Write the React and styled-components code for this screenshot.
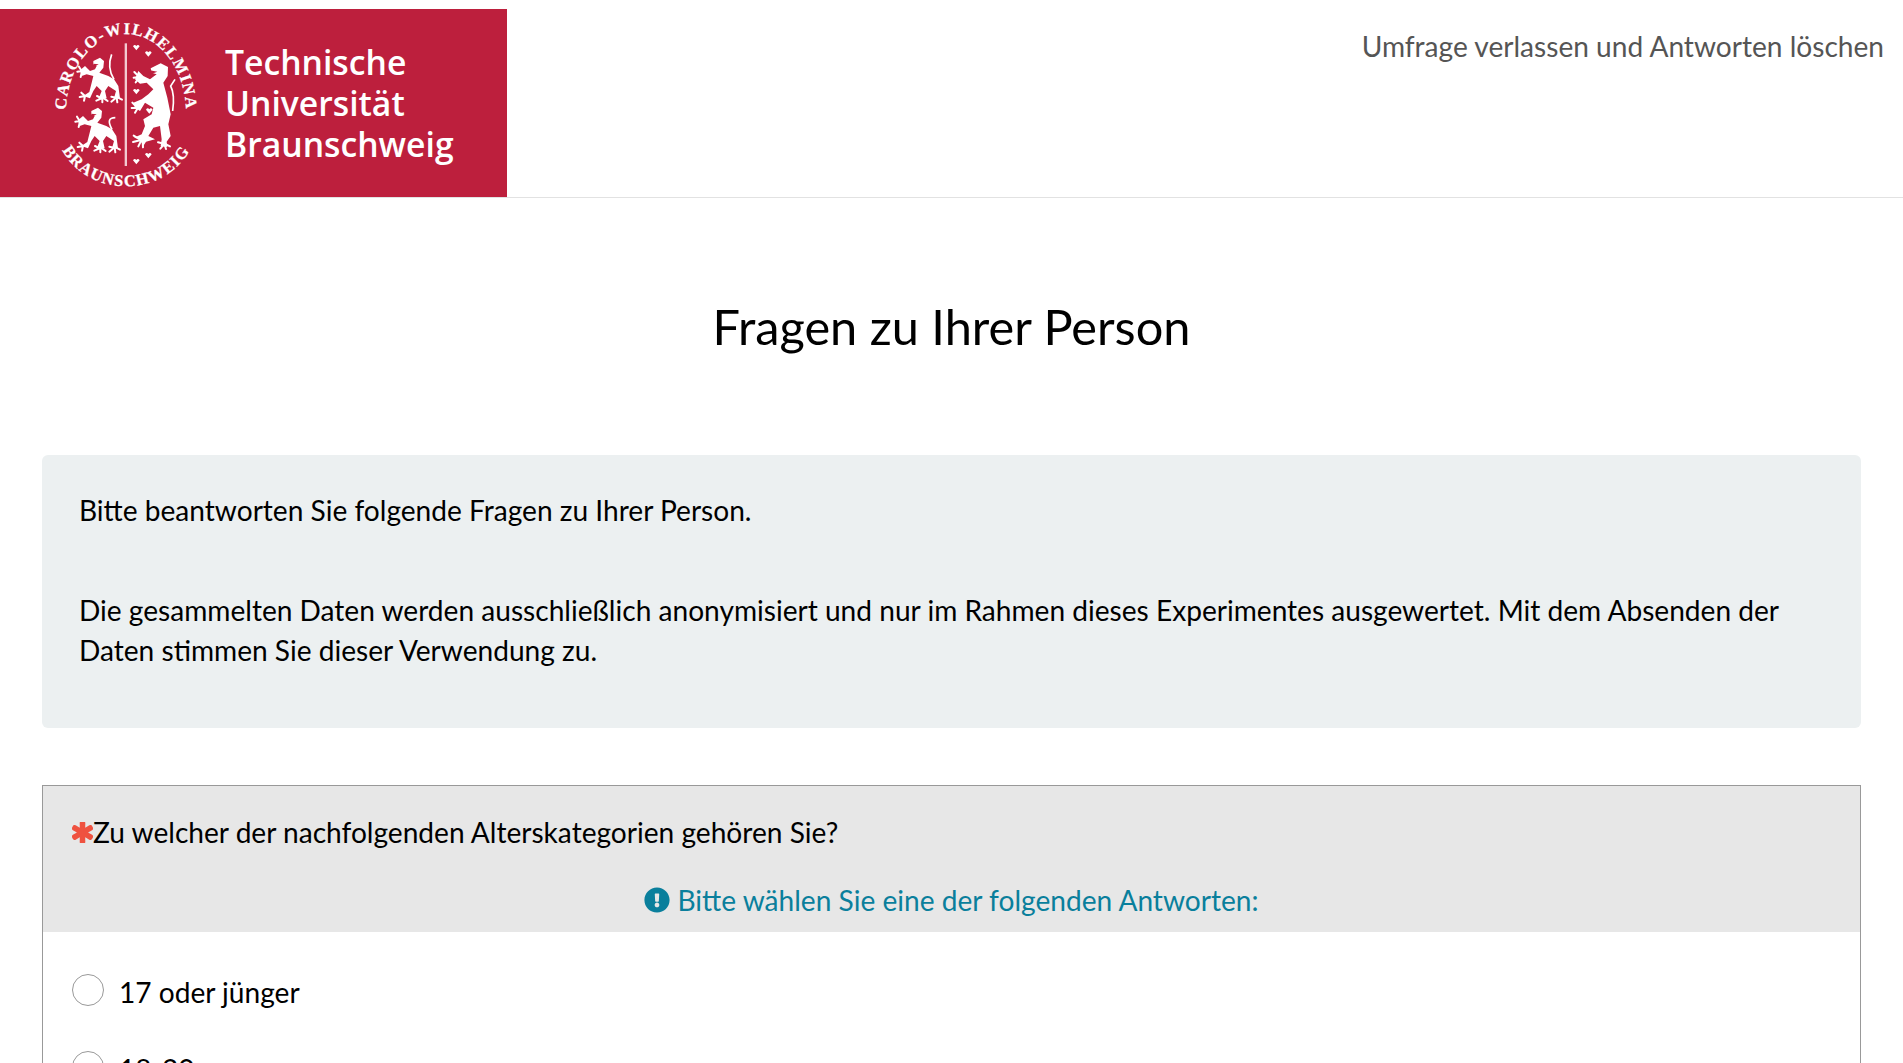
import styled, { createGlobalStyle } from "styled-components";
import { FaAsterisk, FaExclamationCircle } from "react-icons/fa";

const GlobalStyle = createGlobalStyle`
    html, body {
        margin: 0;
        padding: 0;
        background: #fff;
        overflow: hidden;
    }
    body {
        font-family: Lato, "Liberation Sans", sans-serif;
        color: #000;
    }
`;

const Page = styled.div`
    height: 1063px;
    overflow: hidden;
`;

const Header = styled.header`
    height: 188px;
    padding-top: 9px;
    display: flex;
    justify-content: space-between;
    align-items: flex-start;
    border-bottom: 1px solid #e2e2e2;
`;

const Logo = styled.div`
    width: 507px;
    height: 188px;
    background: #bd1f3d;
    display: flex;
    align-items: center;
    padding-left: 40px;
    box-sizing: border-box;
    gap: 15px;
`;

const LogoName = styled.div`
    font-family: "Open Sans", sans-serif;
    font-weight: 600;
    font-size: 33.7px;
    line-height: 41px;
    color: #fff;
`;

const LeaveLink = styled.a`
    margin: 17px 19px 0 0;
    font-size: 28.1px;
    line-height: 40px;
    color: #555;
`;

const Title = styled.h1`
    margin: 0;
    padding: 98px 0 0;
    height: 159px;
    box-sizing: content-box;
    text-align: center;
    font-size: 48.7px;
    line-height: 60px;
    font-weight: 400;
    color: #000;
`;

const IntroBox = styled.section`
    margin: 0 42px;
    height: 273px;
    box-sizing: border-box;
    padding: 35px 37px;
    background: #ecf0f1;
    border-radius: 6px;
    font-size: 28.1px;
    line-height: 40px;
`;

const Paragraph = styled.p`
    margin: 0 0 60px;
    &:last-child {
        margin-bottom: 0;
    }
`;

const Question = styled.section`
    margin: 57px 42px 0;
    border: 1px solid #999;
`;

const QuestionHead = styled.div`
    height: 146px;
    box-sizing: border-box;
    padding-top: 26px;
    background: #e7e7e7;
`;

const QuestionTitle = styled.div`
    display: flex;
    align-items: center;
    padding-left: 29px;
    font-size: 28.1px;
    line-height: 40px;
`;

const Required = styled(FaAsterisk)`
    width: 21px;
    height: 21px;
    color: #ef5240;
    stroke: currentColor;
    stroke-width: 50px;
`;

const Hint = styled.div`
    margin-top: 28px;
    display: flex;
    justify-content: center;
    align-items: center;
    gap: 7px;
    font-size: 28.1px;
    line-height: 40px;
    color: #0a7f9c;
`;

const HintIcon = styled(FaExclamationCircle)`
    width: 26px;
    height: 26px;
`;

const Options = styled.div`
    padding: 40px 29px 0;
    display: flex;
    flex-direction: column;
    gap: 37px;
`;

const Option = styled.label`
    display: flex;
    align-items: flex-start;
    gap: 15px;
    font-size: 28.1px;
    line-height: 40px;
`;

const Radio = styled.span`
    width: 32px;
    height: 32px;
    margin-top: 2px;
    box-sizing: border-box;
    border: 1px solid #999;
    border-radius: 50%;
    background: #fff;
`;

const SealSvg = styled.svg`
    flex-shrink: 0;
`;

const SealText = styled.text`
    font-family: "Liberation Serif", serif;
    font-weight: 700;
    font-size: 49px;
    fill: #fff;
    stroke: #fff;
    stroke-width: 0.8px;
    letter-spacing: 4px;
`;

const small =
    "M160 150 L180 140 L192 150 L190 170 L178 185 L205 195 L222 205 L235 225 L240 262 L222 262 L228 240 L205 225 L195 240 L200 262 L175 265 L185 240 L170 225 L160 240 L150 262 L130 255 L148 243 L155 215 L160 195 L140 190 L125 195 L120 178 L135 165 L150 180 L165 175 L170 165 L160 160 Z";
const smallClaws =
    "M125 180 L117 167 M125 180 L112 182 M125 185 L122 198 M135 255 L124 245 M135 255 L119 258 M135 255 L132 269 M185 262 L171 255 M185 262 L169 269 M187 262 L187 274 M192 262 L203 270 M228 260 L214 257 M228 260 L214 272 M230 260 L232 274 M234 260 L246 266";
const big =
    "M332 172 L362 157 L384 168 L383 195 L370 215 L382 260 L392 310 L385 340 L392 375 L380 392 L382 408 L362 405 L365 385 L360 345 L340 350 L325 375 L345 385 L318 392 L310 405 L300 385 L282 380 L305 370 L315 345 L310 325 L335 310 L340 290 L315 275 L300 300 L285 290 L280 275 L305 265 L325 250 L340 235 L320 215 L300 218 L285 205 L295 180 L310 195 L330 205 L350 190 L335 185 Z";
const bigClaws =
    "M295 195 L283 183 M295 198 L281 200 M296 202 L287 214 M290 288 L277 275 M290 290 L275 291 M292 293 L285 305 M300 385 L281 374 M300 388 L279 393 M303 390 L295 406 M308 392 L309 409 M372 398 L354 394 M372 400 L361 413 M374 402 L378 414 M378 400 L390 406";
const hearts = [[289, 108], [325, 127], [289, 240], [328, 298], [289, 450], [325, 432]];

function Seal() {
    return (
        <SealSvg width="170" height="185" viewBox="0 0 510 555">
            <defs>
                <path id="sealTop" d="M78 305 A180 236 0 0 1 438 305" />
                <path id="sealBottom" d="M44 330 A214 196 0 0 0 472 330" />
            </defs>
            <SealText>
                <textPath href="#sealTop" startOffset="50%" textAnchor="middle">CAROLO-WILHELMINA</textPath>
            </SealText>
            <SealText>
                <textPath href="#sealBottom" startOffset="50%" textAnchor="middle">BRAUNSCHWEIG</textPath>
            </SealText>
            <rect x="254" y="97" width="7" height="368" fill="#f3c9d1" />
            <g fill="#fff">
                <path d={small} />
                <path d={small} transform="translate(-6 150)" />
                <path d={big} />
                {hearts.map(([x, y]) => (
                    <path key={`${x}-${y}`} d={`M${x} ${y + 10} L${x - 10} ${y - 2} Q${x - 5} ${y - 10} ${x} ${y - 3} Q${x + 5} ${y - 10} ${x + 10} ${y - 2} Z`} />
                ))}
            </g>
            <g fill="none" stroke="#fff" strokeWidth="6" strokeLinecap="round">
                <path d={smallClaws} />
                <path d={smallClaws} transform="translate(-6 150)" />
                <path d={bigClaws} />
            </g>
            <g fill="none" stroke="#fff" strokeWidth="5">
                <path d="M222 205 Q200 170 215 130" />
                <path d="M216 355 Q196 320 226 320" />
                <path d="M398 300 Q405 250 392 225 L405 205" />
            </g>
            <g fill="#bd1f3d">
                <path d="M330 178 L352 182 L332 190 Z" />
                <path d="M160 158 L176 160 L163 167 Z" />
                <path d="M154 308 L170 310 L157 317 Z" />
            </g>
        </SealSvg>
    );
}

export default function App() {
    return (
        <Page>
            <GlobalStyle />
            <Header>
                <Logo>
                    <Seal />
                    <LogoName>
                        Technische<br />
                        Universität<br />
                        Braunschweig
                    </LogoName>
                </Logo>
                <LeaveLink>Umfrage verlassen und Antworten löschen</LeaveLink>
            </Header>
            <Title>Fragen zu Ihrer Person</Title>
            <IntroBox>
                <Paragraph>Bitte beantworten Sie folgende Fragen zu Ihrer Person.</Paragraph>
                <Paragraph>
                    Die gesammelten Daten werden ausschließlich anonymisiert und nur im Rahmen dieses Experimentes
                    ausgewertet. Mit dem Absenden der Daten stimmen Sie dieser Verwendung zu.
                </Paragraph>
            </IntroBox>
            <Question>
                <QuestionHead>
                    <QuestionTitle>
                        <Required />
                        Zu welcher der nachfolgenden Alterskategorien gehören Sie?
                    </QuestionTitle>
                    <Hint>
                        <HintIcon />
                        Bitte wählen Sie eine der folgenden Antworten:
                    </Hint>
                </QuestionHead>
                <Options>
                    <Option><Radio />17 oder jünger</Option>
                    <Option><Radio />18-20</Option>
                </Options>
            </Question>
        </Page>
    );
}
